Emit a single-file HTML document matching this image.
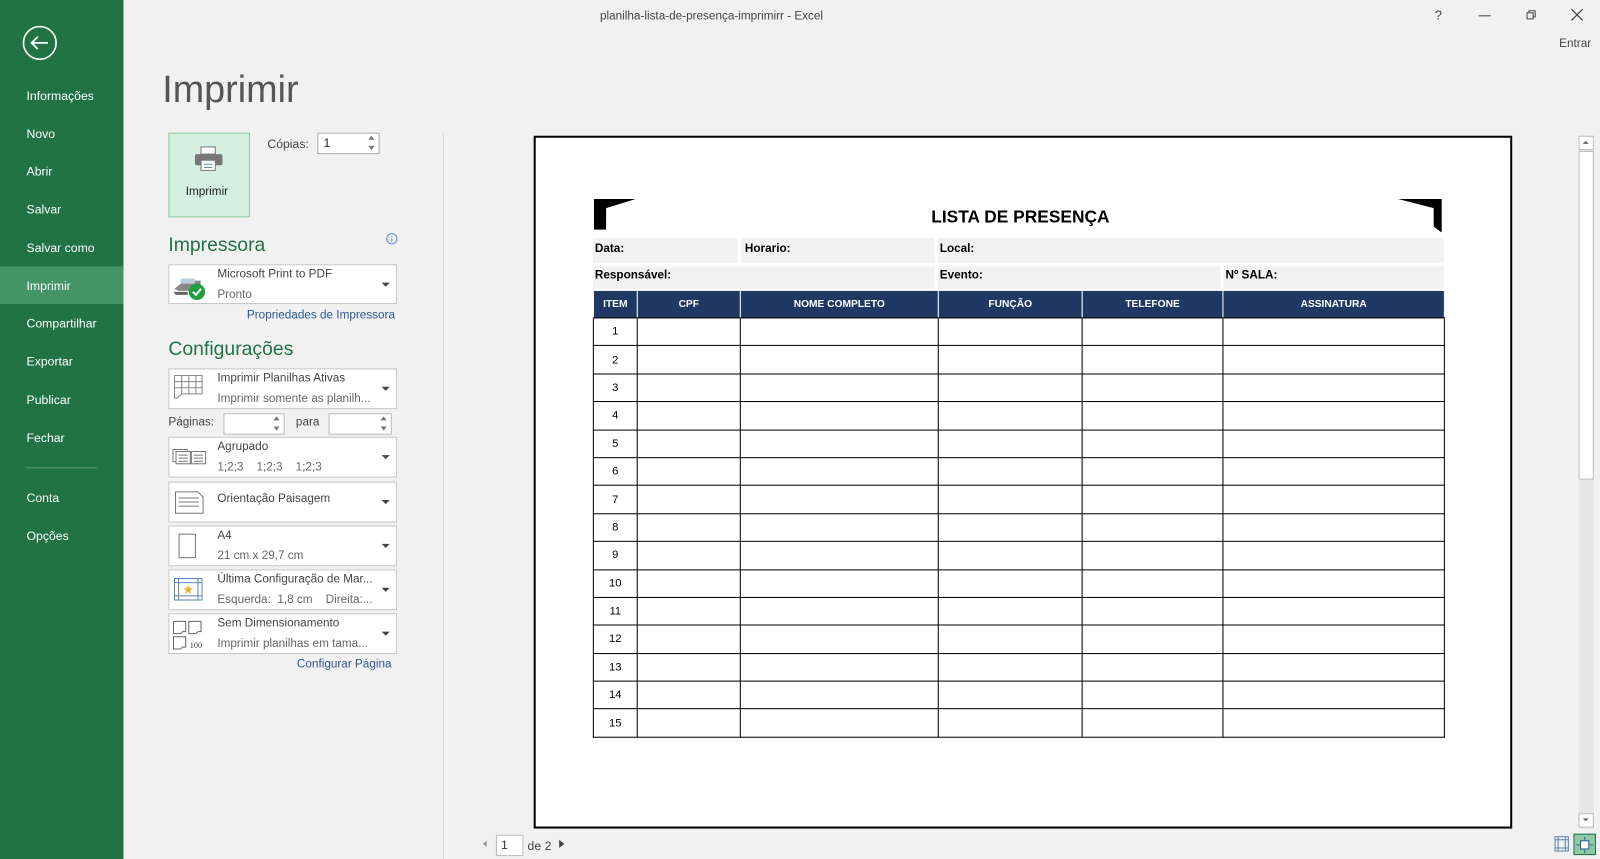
<!DOCTYPE html>
<html><head><meta charset="utf-8"><style>
*{margin:0;padding:0;box-sizing:border-box}
html,body{width:1600px;height:859px;overflow:hidden;background:#f1f1f1;font-family:"Liberation Sans",sans-serif}
#w{position:absolute;left:0;top:0;width:1568px;height:842px;transform:scale(1.0204);transform-origin:0 0}
.a{position:absolute}
.side{left:0;top:0;width:121px;height:842px;background:#217346}
.si{position:absolute;left:26px;color:#fff;font-size:12px}
.t{font-size:12px;color:#444}
.dd{position:absolute;left:165px;width:224px;background:#fff;border:1px solid #c6c6c6}
.dd .l1{position:absolute;left:47px;top:3px;font-size:11.5px;color:#444;white-space:nowrap}
.dd .l2{position:absolute;left:47px;top:23px;font-size:11.5px;color:#666;white-space:nowrap}
.dd .ar{position:absolute;right:6px;top:50%;margin-top:-2px;border-left:4px solid transparent;border-right:4px solid transparent;border-top:4px solid #444}
.h2{position:absolute;left:165px;font-size:19px;color:#217346}
.lk{position:absolute;font-size:11.5px;color:#2b5797}
.c{position:absolute;font-family:"Liberation Sans",sans-serif;font-weight:bold;font-size:11.5px;color:#000}
table{border-collapse:collapse;position:absolute;left:581px;top:284px;font-family:"Liberation Sans",sans-serif;font-size:11px}
td,th{border:1px solid #000;padding:0;text-align:center}
th{background:#1f3864;color:#fff;height:27px;font-size:10px;border-color:#fff #fff #000 #fff}
td{height:27.4px;font-size:11px}
.sp{position:absolute;border:3px solid transparent}
</style></head><body><div id="w">
<div class="a side"></div>
<svg class="a" style="left:22px;top:25px" width="34" height="34"><circle cx="17" cy="17" r="16" fill="none" stroke="#fff" stroke-width="1.6"/><path d="M9 17h16M15 11l-6 6 6 6" fill="none" stroke="#fff" stroke-width="1.8"/></svg>
<div class="si" style="top:87px">Informações</div>
<div class="si" style="top:124px">Novo</div>
<div class="si" style="top:161px">Abrir</div>
<div class="si" style="top:198px">Salvar</div>
<div class="si" style="top:236px">Salvar como</div>
<div class="a" style="left:0;top:261px;width:121px;height:37px;background:#439467"></div>
<div class="si" style="top:273px">Imprimir</div>
<div class="si" style="top:310px">Compartilhar</div>
<div class="si" style="top:347px">Exportar</div>
<div class="si" style="top:385px">Publicar</div>
<div class="si" style="top:422px">Fechar</div>
<div class="a" style="left:26px;top:458px;width:69px;height:1px;background:#5a9a74"></div>
<div class="si" style="top:481px">Conta</div>
<div class="si" style="top:518px">Opções</div>

<div class="a t" style="left:588px;top:10px;font-size:11.5px">planilha-lista-de-presença-imprimirr - Excel</div>
<div class="a t" style="left:1406px;top:7px;font-size:13px">?</div>
<div class="a" style="left:1449px;top:15px;width:12px;height:1px;background:#444"></div>
<svg class="a" style="left:1494px;top:9px" width="12" height="12"><path d="M2.5 3.5h6v6h-6zM4.5 3.5v-2h6v6h-2" fill="none" stroke="#444"/></svg>
<svg class="a" style="left:1539px;top:8px" width="13" height="13"><path d="M1 1l11 11M12 1L1 12" stroke="#444" stroke-width="1.2"/></svg>
<div class="a t" style="left:1528px;top:37px;font-size:11.5px">Entrar</div>

<div class="a" style="left:159px;top:67px;font-size:37px;color:#555;font-family:'Liberation Sans',sans-serif">Imprimir</div>
<div class="a" style="left:165px;top:130px;width:80px;height:83px;background:#d3f0e0;border:1px solid #8fc9a6"></div>
<svg class="a" style="left:190px;top:143px" width="30" height="26"><rect x="7" y="1" width="14" height="7" fill="#fff" stroke="#777"/><rect x="1" y="8" width="27" height="11" rx="2" fill="#777"/><rect x="7" y="14" width="14" height="10" fill="#fff" stroke="#777"/><path d="M10 18h8M10 21h8" stroke="#4a84c4"/></svg>
<div class="a" style="left:182px;top:182px;font-size:11.5px;color:#222">Imprimir</div>
<div class="a t" style="left:262px;top:134px">Cópias:</div>
<div class="a" style="left:311px;top:130px;width:61px;height:21px;background:#fff;border:1px solid #aaa;font-size:12px;padding:2px 5px;color:#222">1</div>
<div class="sp" style="left:361px;top:133px;border-bottom:4px solid #777;border-top:0"></div>
<div class="sp" style="left:361px;top:143px;border-top:4px solid #777;border-bottom:0"></div>

<div class="h2" style="top:230px">Impressora</div>
<svg class="a" style="left:378px;top:228px" width="12" height="12"><circle cx="6" cy="6" r="5" fill="none" stroke="#5a8fd0"/><path d="M6 5v4M6 3v1" stroke="#5a8fd0"/></svg>
<div class="dd" style="top:259px;height:39px"><svg class="a" style="left:3px;top:9px" width="34" height="26"><path d="M2 14l10-8h16l-2 10H6z" fill="#888"/><rect x="8" y="4" width="14" height="5" fill="#bcd"/><path d="M1 17h14v3H3z" fill="#666"/><circle cx="24" cy="17" r="8" fill="#1e9e3c"/><path d="M20 17l3 3 5-6" stroke="#fff" stroke-width="2" fill="none"/></svg><div class="l1">Microsoft Print to PDF</div><div class="l2">Pronto</div><div class="ar"></div></div>
<div class="lk" style="left:242px;top:303px">Propriedades de Impressora</div>

<div class="h2" style="top:332px">Configurações</div>
<div class="dd" style="top:361px;height:40px"><svg class="a" style="left:4px;top:5px" width="30" height="26" fill="none" stroke="#888"><path d="M1 1h27v18H8l-4 4H1zM1 7h27M1 13h27M8 1v18M15 1v18M22 1v18"/></svg><div class="l1">Imprimir Planilhas Ativas</div><div class="l2">Imprimir somente as planilh...</div><div class="ar"></div></div>
<div class="a t" style="left:165px;top:408px;font-size:11.5px">Páginas:</div>
<div class="a" style="left:219px;top:405px;width:60px;height:21px;background:#fff;border:1px solid #bbb"></div>
<div class="sp" style="left:268px;top:408px;border-bottom:4px solid #777;border-top:0"></div>
<div class="sp" style="left:268px;top:418px;border-top:4px solid #777;border-bottom:0"></div>
<div class="a t" style="left:290px;top:408px;font-size:11.5px">para</div>
<div class="a" style="left:322px;top:405px;width:62px;height:21px;background:#fff;border:1px solid #bbb"></div>
<div class="sp" style="left:373px;top:408px;border-bottom:4px solid #777;border-top:0"></div>
<div class="sp" style="left:373px;top:418px;border-top:4px solid #777;border-bottom:0"></div>
<div class="dd" style="top:428px;height:40px"><svg class="a" style="left:3px;top:11px" width="34" height="16" fill="none" stroke="#777"><rect x="0.5" y="0.5" width="14" height="12"/><rect x="3.5" y="2.5" width="14" height="12" fill="#fff"/><rect x="18.5" y="2.5" width="14" height="12"/><path d="M6 6h9M6 9h9M6 12h9M21 6h9M21 9h9M21 12h9"/></svg><div class="l1">Agrupado</div><div class="l2">1;2;3&nbsp;&nbsp;&nbsp; 1;2;3&nbsp;&nbsp;&nbsp; 1;2;3</div><div class="ar"></div></div>
<div class="dd" style="top:472px;height:40px"><svg class="a" style="left:5px;top:8px" width="30" height="24" fill="none" stroke="#777"><path d="M1 1h22l5 5v16H1zM4 7h20M4 11h20M4 15h20"/></svg><div class="l1" style="top:10px">Orientação Paisagem</div><div class="ar"></div></div>
<div class="dd" style="top:515px;height:40px"><div class="a" style="left:9px;top:7px;width:17px;height:24px;border:1px solid #777"></div><div class="l1">A4</div><div class="l2">21 cm x 29,7 cm</div><div class="ar"></div></div>
<div class="dd" style="top:558px;height:40px"><svg class="a" style="left:4px;top:7px" width="30" height="24" fill="none" stroke="#5b84b0"><rect x="1" y="1" width="27" height="21"/><path d="M1 5h27M1 18h27M5 1v21M24 1v21"/><path d="M14.5 7l1.5 3.5h3.5l-3 2 1 3.5-3-2-3 2 1-3.5-3-2h3.5z" fill="#f0b030" stroke="none"/></svg><div class="l1">Última Configuração de Mar...</div><div class="l2">Esquerda:&nbsp; 1,8 cm&nbsp;&nbsp;&nbsp; Direita:...</div><div class="ar"></div></div>
<div class="dd" style="top:601px;height:40px"><svg class="a" style="left:3px;top:5px" width="36" height="30" fill="none" stroke="#666"><path d="M1 2h12v10h-3l-2 2H1zM16 2h12v10h-3l-2 2h-7zM1 17h12v10h-3l-2 2H1z"/><text x="17" y="28" font-size="8" fill="#444" stroke="none" font-family="Liberation Serif">100</text></svg><div class="l1">Sem Dimensionamento</div><div class="l2">Imprimir planilhas em tama...</div><div class="ar"></div></div>
<div class="lk" style="left:291px;top:645px">Configurar Página</div>

<div class="a" style="left:434px;top:130px;width:1px;height:712px;background:#d8d8d8"></div>

<div class="a" style="left:523px;top:133px;width:959px;height:679px;background:#fff;border:2px solid #000"></div>
<svg class="a" style="left:582px;top:195px" width="42" height="31"><path d="M0 0h41l-29 9v21H0z" fill="#000"/></svg>
<svg class="a" style="left:1370px;top:195px" width="43" height="33"><path d="M0 0h43v33l-8-6V9z" fill="#000"/></svg>
<div class="a" style="left:700px;top:203px;width:600px;text-align:center;font-family:'Liberation Sans',sans-serif;font-weight:bold;font-size:17px">LISTA DE PRESENÇA</div>
<div class="a" style="left:581px;top:233px;width:142px;height:25px;background:#f2f2f2"></div>
<div class="a" style="left:726px;top:233px;width:190px;height:25px;background:#f2f2f2"></div>
<div class="a" style="left:919px;top:233px;width:496px;height:25px;background:#f2f2f2"></div>
<div class="a" style="left:581px;top:261px;width:335px;height:22px;background:#f2f2f2"></div>
<div class="a" style="left:919px;top:261px;width:277px;height:22px;background:#f2f2f2"></div>
<div class="a" style="left:1199px;top:261px;width:216px;height:22px;background:#f2f2f2"></div>
<div class="c" style="left:583px;top:238px">Data:</div>
<div class="c" style="left:730px;top:238px">Horario:</div>
<div class="c" style="left:921px;top:238px">Local:</div>
<div class="c" style="left:583px;top:264px">Responsável:</div>
<div class="c" style="left:921px;top:264px">Evento:</div>
<div class="c" style="left:1201px;top:264px">Nº SALA:</div>
<table>
<tr><th style="width:43px">ITEM</th><th style="width:101px">CPF</th><th style="width:194px">NOME COMPLETO</th><th style="width:141px">FUNÇÃO</th><th style="width:138px">TELEFONE</th><th style="width:217px">ASSINATURA</th></tr>
<tr><td>1</td><td></td><td></td><td></td><td></td><td></td></tr>
<tr><td>2</td><td></td><td></td><td></td><td></td><td></td></tr>
<tr><td>3</td><td></td><td></td><td></td><td></td><td></td></tr>
<tr><td>4</td><td></td><td></td><td></td><td></td><td></td></tr>
<tr><td>5</td><td></td><td></td><td></td><td></td><td></td></tr>
<tr><td>6</td><td></td><td></td><td></td><td></td><td></td></tr>
<tr><td>7</td><td></td><td></td><td></td><td></td><td></td></tr>
<tr><td>8</td><td></td><td></td><td></td><td></td><td></td></tr>
<tr><td>9</td><td></td><td></td><td></td><td></td><td></td></tr>
<tr><td>10</td><td></td><td></td><td></td><td></td><td></td></tr>
<tr><td>11</td><td></td><td></td><td></td><td></td><td></td></tr>
<tr><td>12</td><td></td><td></td><td></td><td></td><td></td></tr>
<tr><td>13</td><td></td><td></td><td></td><td></td><td></td></tr>
<tr><td>14</td><td></td><td></td><td></td><td></td><td></td></tr>
<tr><td>15</td><td></td><td></td><td></td><td></td><td></td></tr>
</table>

<div class="a" style="left:1547px;top:133px;width:15px;height:679px;background:#e6e6e6"></div>
<div class="a" style="left:1547px;top:133px;width:15px;height:14px;background:#fff;border:1px solid #bbb"></div>
<div class="a" style="left:1551px;top:138px;border:3px solid transparent;border-bottom:3px solid #666;border-top:0"></div>
<div class="a" style="left:1547px;top:148px;width:15px;height:322px;background:#fff;border:1px solid #bbb"></div>
<div class="a" style="left:1547px;top:797px;width:15px;height:14px;background:#fff;border:1px solid #bbb"></div>
<div class="a" style="left:1551px;top:802px;border:3px solid transparent;border-top:3px solid #666;border-bottom:0"></div>

<div class="a" style="left:473px;top:824px;border:3px solid transparent;border-right:4px solid #999;border-left:0"></div>
<div class="a" style="left:486px;top:818px;width:27px;height:21px;background:#fff;border:1px solid #bbb;font-size:12px;padding:2px 4px;color:#333">1</div>
<div class="a t" style="left:517px;top:822px">de 2</div>
<div class="a" style="left:548px;top:823px;border:4px solid transparent;border-left:5px solid #444;border-right:0"></div>
<svg class="a" style="left:1523px;top:819px" width="16" height="17" fill="none" stroke="#5b84b0"><rect x="1" y="1" width="13" height="14"/><path d="M4 1v14M11 1v14M1 4h13M1 12h13"/></svg>
<div class="a" style="left:1542px;top:817px;width:22px;height:21px;background:#8fc9a6;border:1px solid #217346"></div>
<svg class="a" style="left:1545px;top:820px" width="16" height="16" fill="none" stroke="#2b579a"><rect x="4" y="4" width="8" height="8" fill="#fff"/><path d="M8 0v3M8 13v3M0 8h3M13 8h3"/></svg>
</div></body></html>
